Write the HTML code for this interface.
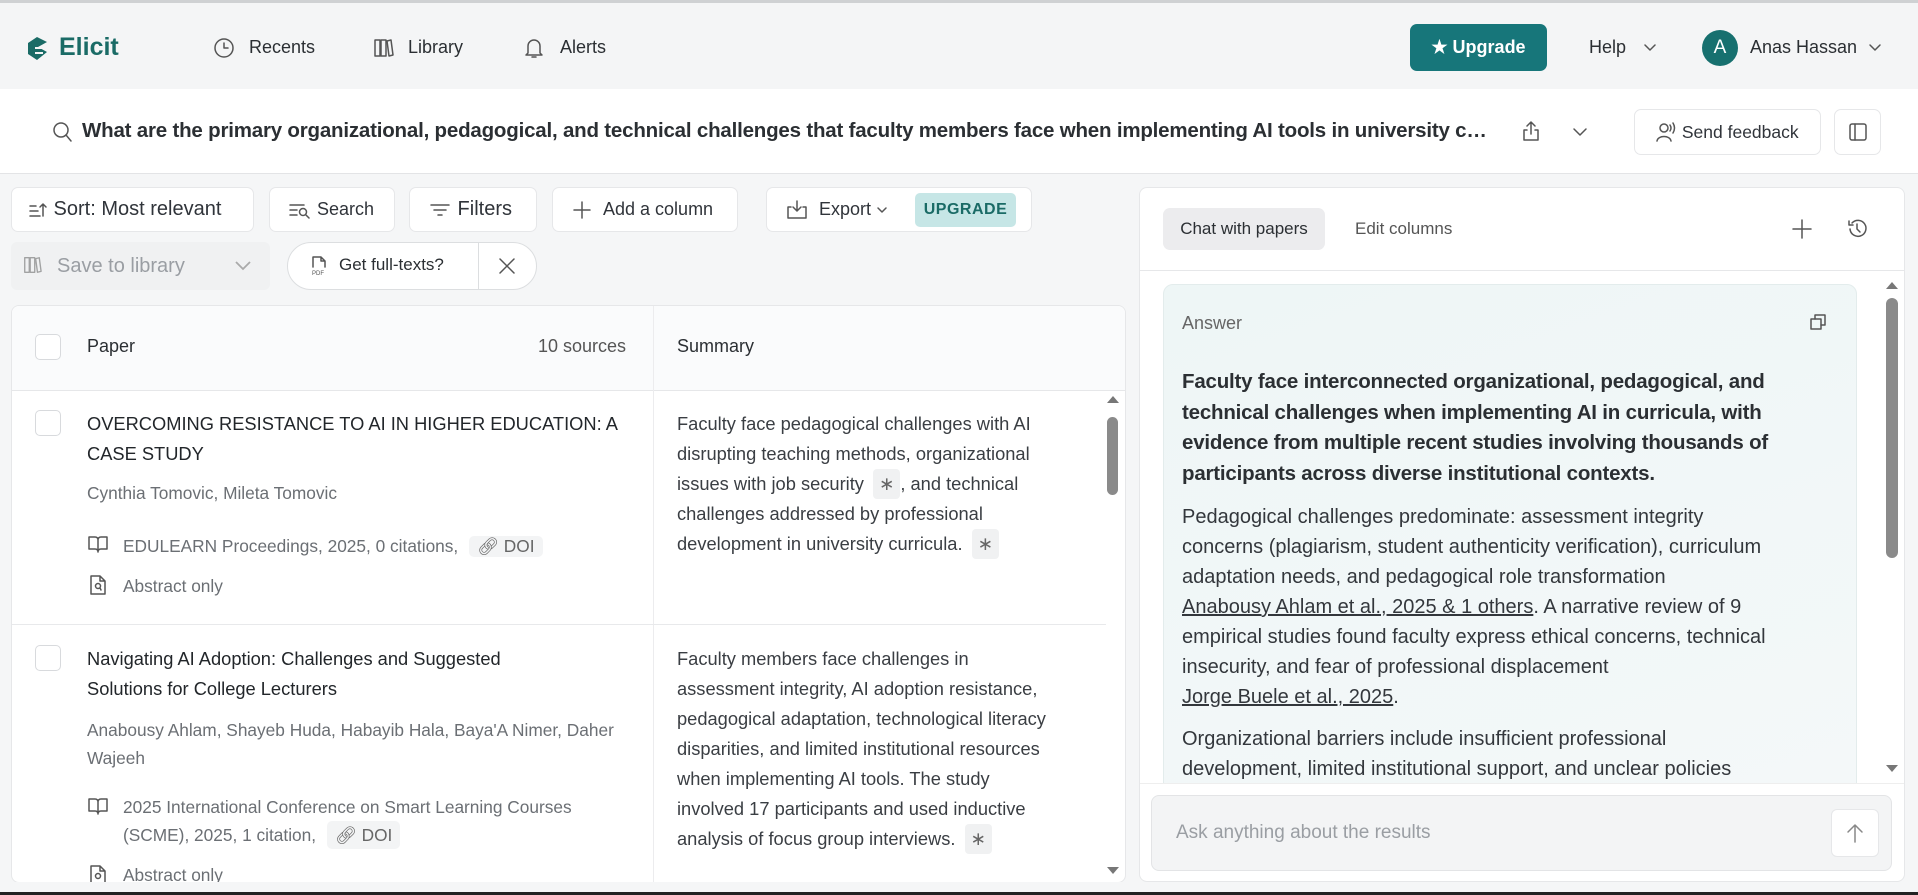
<!DOCTYPE html>
<html><head><meta charset="utf-8"><style>
*{box-sizing:border-box;margin:0;padding:0}
body{width:1918px;height:895px;overflow:hidden;background:#f5f6f7;font-family:"Liberation Sans",sans-serif;color:#2b2f33;position:relative}
.a{position:absolute;white-space:nowrap}
.btn{position:absolute;background:#fff;border:1px solid #e6e7e9;border-radius:7px;display:flex;align-items:center;font-size:19px;color:#30343a}
svg{display:block}
.ic{stroke:#555;fill:none;stroke-width:1.5;stroke-linecap:round;stroke-linejoin:round}
.cb{position:absolute;width:26px;height:26px;border:1.5px solid #d8dadd;border-radius:5px;background:#fff}
.t{font-size:18.3px;color:#22262a;line-height:30px}
.g{font-size:17.3px;color:#6b6f74}
.sum{font-size:18.3px;color:#3a3e43;line-height:30px}
.ast{display:inline-block;background:#f0f1f2;border-radius:4px;padding:0 6px;color:#666;margin-left:4px}
.doi{display:inline-block;background:#f3f4f5;border-radius:5px;padding:0 8px;color:#666;margin-left:6px}
</style></head><body>
<div class="a" style="left:0;top:0;width:1918px;height:3px;background:#cfd1d3"></div>
<div class="a" style="left:0;top:3px;width:1918px;height:86px;background:#f4f5f6"></div>
<svg class="a" style="left:26px;top:36px" width="22" height="25" viewBox="0 0 22 25"><path d="M11 1L21 6L12 11L21 16L11 24L2 18V7Z" fill="#1a6b66"/><path d="M9 12H18M9 17H17" stroke="#f4f5f6" stroke-width="2"/></svg>
<div class="a" style="left:59px;top:33px;font-size:25px;font-weight:bold;color:#1a6b66">Elicit</div>
<svg class="a ic" style="left:213px;top:37px" width="22" height="22" viewBox="0 0 22 22"><circle cx="11" cy="11" r="9"/><path d="M11 6V11H15"/></svg>
<div class="a" style="left:249px;top:37px;font-size:18px">Recents</div>
<svg class="a ic" style="left:372px;top:37px" width="22" height="22" viewBox="0 0 22 22"><rect x="3" y="3" width="5" height="16"/><rect x="9" y="3" width="5" height="16"/><path d="M15 4L19 3L21 18L17 19Z"/></svg>
<div class="a" style="left:408px;top:37px;font-size:18px">Library</div>
<svg class="a ic" style="left:523px;top:36px" width="22" height="24" viewBox="0 0 22 24"><path d="M5 17V10A6 6 0 0 1 17 10V17L19 19H3Z M9 21H13"/></svg>
<div class="a" style="left:560px;top:37px;font-size:18px">Alerts</div>
<div class="a" style="left:1410px;top:24px;width:137px;height:47px;background:#17767a;border-radius:7px;color:#fff;font-size:18px;font-weight:bold;display:flex;align-items:center;justify-content:center">&#9733;&nbsp;Upgrade</div>
<div class="a" style="left:1589px;top:37px;font-size:18px">Help</div>
<svg class="a ic" style="left:1643px;top:42px" width="14" height="10" viewBox="0 0 14 10"><path d="M2 3L7 8L12 3"/></svg>
<div class="a" style="left:1702px;top:30px;width:36px;height:36px;border-radius:50%;background:#17706f;color:#fff;font-size:19px;display:flex;align-items:center;justify-content:center">A</div>
<div class="a" style="left:1750px;top:37px;font-size:18px">Anas Hassan</div>
<svg class="a ic" style="left:1868px;top:42px" width="14" height="10" viewBox="0 0 14 10"><path d="M2 3L7 8L12 3"/></svg>
<div class="a" style="left:0;top:89px;width:1918px;height:85px;background:#fff;border-bottom:1px solid #e3e4e6"></div>
<svg class="a ic" style="left:52px;top:120px" width="22" height="24" viewBox="0 0 22 24"><circle cx="9" cy="10" r="7"/><path d="M14 15L19 21"/></svg>
<div class="a" style="left:82px;top:119px;width:1414px;overflow:hidden;text-overflow:ellipsis;font-size:20.5px;font-weight:bold;color:#2b2f33;letter-spacing:-0.2px">What are the primary organizational, pedagogical, and technical challenges that faculty members face when implementing AI tools in university curricula?</div>
<svg class="a ic" style="left:1521px;top:119px" width="20" height="24" viewBox="0 0 20 24"><path d="M10 3V15M6 7L10 3L14 7M6 11H3V21H17V11H14"/></svg>
<svg class="a ic" style="left:1572px;top:127px" width="16" height="10" viewBox="0 0 16 10"><path d="M2 2L8 8L14 2"/></svg>
<div class="btn" style="left:1634px;top:109px;width:187px;height:46px;font-size:17.5px;padding-left:20px"><svg class="ic" width="22" height="22" viewBox="0 0 22 22"><circle cx="9" cy="7" r="4"/><path d="M2 20C3 14 15 14 16 20M15 4Q17 7 15 10M18 2Q21 7 18 12"/></svg>&nbsp;Send feedback</div>
<div class="btn" style="left:1834px;top:109px;width:47px;height:46px;justify-content:center"><svg class="ic" width="20" height="20" viewBox="0 0 20 20"><rect x="2" y="2" width="16" height="16" rx="2"/><path d="M7 2V18"/></svg></div>
<div class="btn" style="left:11px;top:187px;width:243px;height:45px;padding-left:16px;font-size:20px"><svg class="ic" width="20" height="18" viewBox="0 0 20 18"><path d="M2 5H8M2 10H10M2 15H12M15 15V3M12 6L15 3L18 6"/></svg>&nbsp;Sort: Most relevant</div>
<div class="btn" style="left:269px;top:187px;width:126px;height:45px;padding-left:18px;font-size:18px"><svg class="ic" width="24" height="18" viewBox="0 0 24 18"><path d="M2 4H16M2 9H9M2 14H9"/><circle cx="15" cy="11" r="3.5"/><path d="M18 14L21 17"/></svg>&nbsp;Search</div>
<div class="btn" style="left:409px;top:187px;width:128px;height:45px;padding-left:18px;font-size:20px"><svg class="ic" width="24" height="18" viewBox="0 0 24 18"><path d="M3 4H21M6 9H18M10 14H14"/></svg>&nbsp;Filters</div>
<div class="btn" style="left:552px;top:187px;width:186px;height:45px;padding-left:18px;font-size:18px"><svg class="ic" width="22" height="22" viewBox="0 0 22 22"><path d="M11 3V19M3 11H19"/></svg>&nbsp;&nbsp;Add a column</div>
<div class="btn" style="left:766px;top:187px;width:266px;height:45px;padding-left:18px;font-size:18px"><svg class="ic" width="24" height="22" viewBox="0 0 24 22"><path d="M12 2V12M8 8L12 12L16 8M6 8H3V19H21V8H18"/></svg>&nbsp;&nbsp;Export&nbsp;<svg class="ic" width="12" height="8" viewBox="0 0 12 8"><path d="M2 2L6 6L10 2"/></svg></div>
<div class="a" style="left:915px;top:193px;width:101px;height:34px;background:#c6e6e6;border-radius:5px;color:#1a6b66;font-size:16px;font-weight:bold;display:flex;align-items:center;justify-content:center;letter-spacing:.5px">UPGRADE</div>
<div class="a" style="left:11px;top:242px;width:259px;height:48px;background:#f0f1f2;border-radius:6px"></div>
<svg class="a ic" style="left:22px;top:255px;opacity:.5" width="20" height="20" viewBox="0 0 22 22"><rect x="3" y="3" width="5" height="16"/><rect x="9" y="3" width="5" height="16"/><path d="M15 4L19 3L21 18L17 19Z"/></svg>
<div class="a" style="left:57px;top:255px;font-size:20px;color:#9a9ea3">Save to library</div>
<svg class="a" style="left:234px;top:260px" width="18" height="12" viewBox="0 0 18 12"><path d="M2 2L9 9L16 2" stroke="#aaa" stroke-width="1.8" fill="none"/></svg>
<div class="a" style="left:287px;top:242px;width:250px;height:48px;background:#fff;border:1px solid #dcdee0;border-radius:24px"></div>
<div class="a" style="left:478px;top:243px;width:1px;height:46px;background:#dcdee0"></div>
<svg class="a ic" style="left:311px;top:255px" width="16" height="22" viewBox="0 0 16 22"><path d="M2 2H10L14 6V12M2 2V12M10 2V6H14"/><text x="1" y="20" font-size="6" fill="#555" stroke="none" font-family="Liberation Sans">PDF</text></svg>
<div class="a" style="left:339px;top:255px;font-size:17px">Get full-texts?</div>
<svg class="a ic" style="left:497px;top:256px" width="20" height="20" viewBox="0 0 20 20"><path d="M3 3L17 17M17 3L3 17"/></svg>
<div class="a" style="left:11px;top:305px;width:1115px;height:578px;background:#fff;border:1px solid #e6e7e9;border-radius:8px;overflow:hidden">
 <div class="a" style="left:0;top:0;width:1115px;height:85px;background:#fafbfc;border-bottom:1px solid #e6e7e9"></div>
 <div class="a" style="left:641px;top:0;width:1px;height:578px;background:#ececee"></div>
 <div class="a" style="left:0;top:318px;width:1094px;height:1px;background:#e8e9eb"></div>
</div>
<div class="cb" style="left:35px;top:334px"></div>
<div class="a" style="left:87px;top:336px;font-size:18px">Paper</div>
<div class="a" style="left:538px;top:336px;font-size:18px;color:#555">10 sources</div>
<div class="a" style="left:677px;top:336px;font-size:18px">Summary</div>
<div class="cb" style="left:35px;top:410px"></div>
<div class="a t" style="left:87px;top:409px">OVERCOMING RESISTANCE TO AI IN HIGHER EDUCATION: A<br>CASE STUDY</div>
<div class="a g" style="left:87px;top:483px">Cynthia Tomovic, Mileta Tomovic</div>
<svg class="a ic" style="left:87px;top:534px" width="22" height="20" viewBox="0 0 22 20"><path d="M2 3H8Q11 3 11 6V18Q11 15 8 15H2ZM20 3H14Q11 3 11 6M20 3V15H14Q11 15 11 18"/></svg>
<div class="a g" style="left:123px;top:536px">EDULEARN Proceedings, 2025, 0 citations, <span class="doi">&#128279;&#xFE0E; DOI</span></div>
<svg class="a ic" style="left:89px;top:574px" width="18" height="22" viewBox="0 0 18 22"><path d="M2 2H11L16 7V20H2Z M11 2V7H16"/><circle cx="9" cy="12" r="2.5"/><path d="M11 14L12 16"/></svg>
<div class="a g" style="left:123px;top:576px">Abstract only</div>
<div class="a sum" style="left:677px;top:409px">Faculty face pedagogical challenges with AI<br>disrupting teaching methods, organizational<br>issues with job security <span class="ast">&#8727;</span>, and technical<br>challenges addressed by professional<br>development in university curricula. <span class="ast">&#8727;</span></div>
<div class="cb" style="left:35px;top:645px"></div>
<div class="a t" style="left:87px;top:644px">Navigating AI Adoption: Challenges and Suggested<br>Solutions for College Lecturers</div>
<div class="a g" style="left:87px;top:716px;line-height:28px">Anabousy Ahlam, Shayeb Huda, Habayib Hala, Baya'A Nimer, Daher<br>Wajeeh</div>
<svg class="a ic" style="left:87px;top:796px" width="22" height="20" viewBox="0 0 22 20"><path d="M2 3H8Q11 3 11 6V18Q11 15 8 15H2ZM20 3H14Q11 3 11 6M20 3V15H14Q11 15 11 18"/></svg>
<div class="a g" style="left:123px;top:793px;line-height:28px">2025 International Conference on Smart Learning Courses<br>(SCME), 2025, 1 citation, <span class="doi">&#128279;&#xFE0E; DOI</span></div>
<svg class="a ic" style="left:89px;top:864px" width="18" height="22" viewBox="0 0 18 22"><path d="M2 2H11L16 7V20H2Z M11 2V7H16"/><circle cx="9" cy="12" r="2.5"/></svg>
<div class="a g" style="left:123px;top:865px">Abstract only</div>
<div class="a sum" style="left:677px;top:644px">Faculty members face challenges in<br>assessment integrity, AI adoption resistance,<br>pedagogical adaptation, technological literacy<br>disparities, and limited institutional resources<br>when implementing AI tools. The study<br>involved 17 participants and used inductive<br>analysis of focus group interviews. <span class="ast">&#8727;</span></div>
<div class="a" style="left:11px;top:882px;width:1115px;height:13px;background:#f5f6f7"></div>
<svg class="a" style="left:1106px;top:394px" width="14" height="10"><path d="M1 9L7 2L13 9Z" fill="#777"/></svg>
<div class="a" style="left:1107px;top:417px;width:11px;height:78px;background:#8a8a8a;border-radius:6px"></div>
<svg class="a" style="left:1106px;top:866px" width="14" height="10"><path d="M1 1L7 8L13 1Z" fill="#777"/></svg>
<div class="a" style="left:1139px;top:187px;width:766px;height:695px;background:#fff;border:1px solid #e6e7e9;border-radius:8px"></div>
<div class="a" style="left:1140px;top:270px;width:764px;height:1px;background:#e6e7e9"></div>
<div class="a" style="left:1163px;top:208px;width:162px;height:42px;background:#ececee;border-radius:7px;font-size:17px;display:flex;align-items:center;justify-content:center">Chat with papers</div>
<div class="a" style="left:1355px;top:219px;font-size:17px;color:#555">Edit columns</div>
<svg class="a ic" style="left:1791px;top:218px" width="22" height="22" viewBox="0 0 22 22"><path d="M11 2V20M2 11H20"/></svg>
<svg class="a ic" style="left:1846px;top:218px" width="22" height="22" viewBox="0 0 22 22"><path d="M4 11A8 8 0 1 0 6 5M3 3V7H7M11 6V11L14 14"/></svg>
<div class="a" style="left:1163px;top:284px;width:694px;height:520px;background:linear-gradient(160deg,#eef6f6,#f4f8f9);border:1px solid #e3ecec;border-radius:10px"></div>
<div class="a" style="left:1182px;top:313px;font-size:18px;color:#666">Answer</div>
<svg class="a ic" style="left:1808px;top:312px" width="20" height="20" viewBox="0 0 20 20"><rect x="3" y="7" width="10" height="10"/><path d="M7 7V3H17V13H13"/></svg>
<div class="a" style="left:1182px;top:367px;font-size:20.5px;font-weight:bold;line-height:30.5px;color:#2b2f33;letter-spacing:-0.2px">Faculty face interconnected organizational, pedagogical, and<br>technical challenges when implementing AI in curricula, with<br>evidence from multiple recent studies involving thousands of<br>participants across diverse institutional contexts.</div>
<div class="a" style="left:1182px;top:502px;font-size:20px;line-height:30px;color:#33373c">Pedagogical challenges predominate: assessment integrity<br>concerns (plagiarism, student authenticity verification), curriculum<br>adaptation needs, and pedagogical role transformation<br><u>Anabousy Ahlam et al., 2025 &amp; 1 others</u>. A narrative review of 9<br>empirical studies found faculty express ethical concerns, technical<br>insecurity, and fear of professional displacement<br><u>Jorge Buele et al., 2025</u>.</div>
<div class="a" style="left:1182px;top:724px;font-size:20px;line-height:30px;color:#33373c">Organizational barriers include insufficient professional<br>development, limited institutional support, and unclear policies</div>
<div class="a" style="left:1140px;top:783px;width:764px;height:98px;background:#fff;border-top:1px solid #eee;border-radius:0 0 8px 8px"></div>
<svg class="a" style="left:1885px;top:280px" width="14" height="10"><path d="M1 9L7 2L13 9Z" fill="#777"/></svg>
<div class="a" style="left:1886px;top:298px;width:12px;height:260px;background:#8a8a8a;border-radius:6px"></div>
<svg class="a" style="left:1885px;top:764px" width="14" height="10"><path d="M1 1L7 8L13 1Z" fill="#777"/></svg>
<div class="a" style="left:1151px;top:795px;width:741px;height:76px;background:#f3f4f5;border:1px solid #e3e4e6;border-radius:8px"></div>
<div class="a" style="left:1176px;top:822px;font-size:19px;color:#9a9ea3">Ask anything about the results</div>
<div class="a" style="left:1831px;top:809px;width:48px;height:48px;background:#fff;border:1px solid #e6e7e9;border-radius:6px"></div>
<svg class="a ic" style="left:1845px;top:822px" width="20" height="22" viewBox="0 0 20 22"><path d="M10 20V3M3 10L10 3L17 10" stroke="#888"/></svg>
<div class="a" style="left:0;top:892px;width:1918px;height:3px;background:#222"></div>
</body></html>
